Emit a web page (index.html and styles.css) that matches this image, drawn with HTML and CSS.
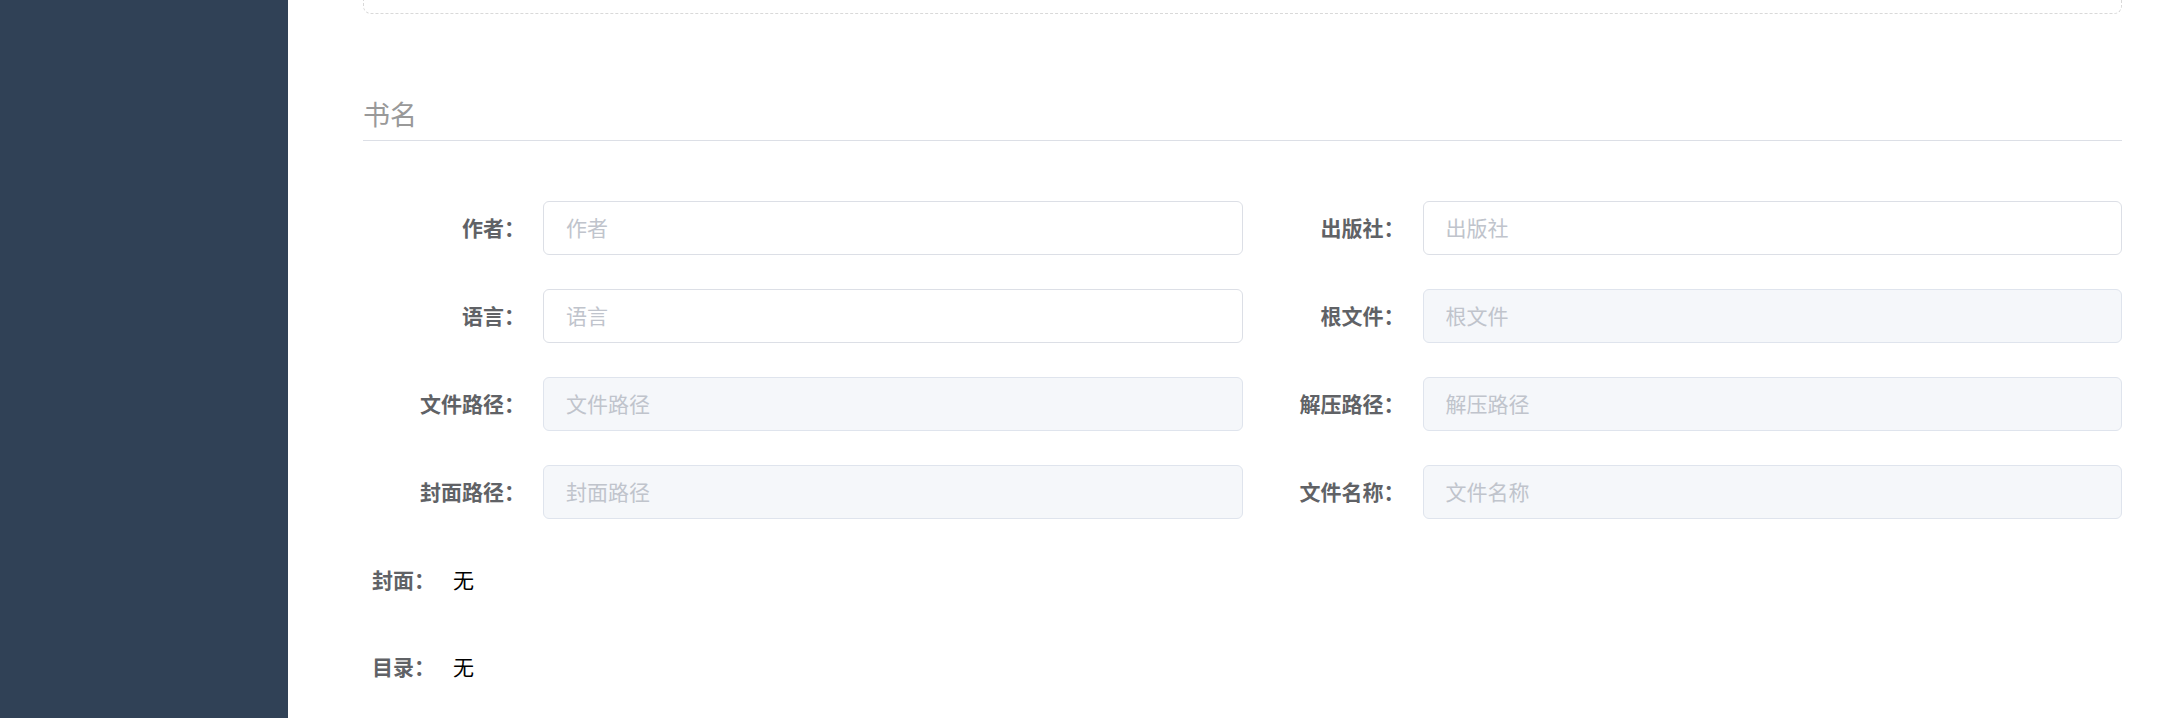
FILE: index.html
```html
<!DOCTYPE html>
<html lang="zh-CN">
<head>
<meta charset="utf-8">
<title>书名</title>
<link rel="stylesheet" href="styles.css">
</head>
<body>
<div class="app">
<aside class="sidebar"></aside>
<main class="main">
<div class="upload"></div>
<form class="form">
<input class="title" type="text" placeholder="书名" aria-label="书名">
<div class="grid">
<div class="item"><label class="label" for="author">作者：</label><input class="input" id="author" placeholder="作者"></div>
<div class="item"><label class="label" for="publisher">出版社：</label><input class="input" id="publisher" placeholder="出版社"></div>
<div class="item"><label class="label" for="language">语言：</label><input class="input" id="language" placeholder="语言"></div>
<div class="item"><label class="label" for="root">根文件：</label><input class="input" id="root" placeholder="根文件" disabled></div>
<div class="item"><label class="label" for="path">文件路径：</label><input class="input" id="path" placeholder="文件路径" disabled></div>
<div class="item"><label class="label" for="unzip">解压路径：</label><input class="input" id="unzip" placeholder="解压路径" disabled></div>
<div class="item"><label class="label" for="coverpath">封面路径：</label><input class="input" id="coverpath" placeholder="封面路径" disabled></div>
<div class="item"><label class="label" for="filename">文件名称：</label><input class="input" id="filename" placeholder="文件名称" disabled></div>
</div>
<div class="item item-short"><span class="label">封面：</span><span class="value">无</span></div>
<div class="item item-short"><span class="label">目录：</span><span class="value">无</span></div>
</form>
</main>
</div>
</body>
</html>
```
FILE: styles.css
```css
* { box-sizing: border-box; }
body { margin: 0; font-family: "Noto Sans CJK SC", sans-serif; font-size: 21px; color: #000; background: #fff; }
.app { display: flex; min-height: 100vh; }
.sidebar { flex: 0 0 288px; background: #304156; }
.main { flex: 1; min-width: 0; padding: 0 50px 0 75px; }
.upload { height: 14px; border: 1px dashed #d9d9d9; border-top: 0; border-radius: 0 0 8px 8px; }
.title { display: block; width: 100%; height: 53px; margin: 74px 0 60px; padding: 0 0 2px; border: 0; border-bottom: 1px solid #dcdfe6; outline: none; background: none; font-family: inherit; font-size: 27px; }
.title::placeholder { color: #999; opacity: 1; }
.grid { display: grid; grid-template-columns: 1fr 1fr; row-gap: 34px; margin-bottom: 34px; }
.item { display: flex; height: 54px; align-items: center; }
.label { flex: 0 0 180px; padding: 0 18px 3px 0; text-align: right; font-weight: 700; color: #606266; }
.value { padding-bottom: 3px; }
.input { flex: 1; min-width: 0; height: 54px; padding: 0 22px 2px; border: 1px solid #dcdfe6; border-radius: 6px; background: #fff; outline: none; font-family: inherit; font-size: 21px; color: #606266; }
.input::placeholder { color: #c0c4cc; opacity: 1; }
.input:disabled { background: #f5f7fa; border-color: #dfe4ed; }
.item-short { margin-bottom: 33px; }
.item-short .label { flex-basis: 90px; }
```
